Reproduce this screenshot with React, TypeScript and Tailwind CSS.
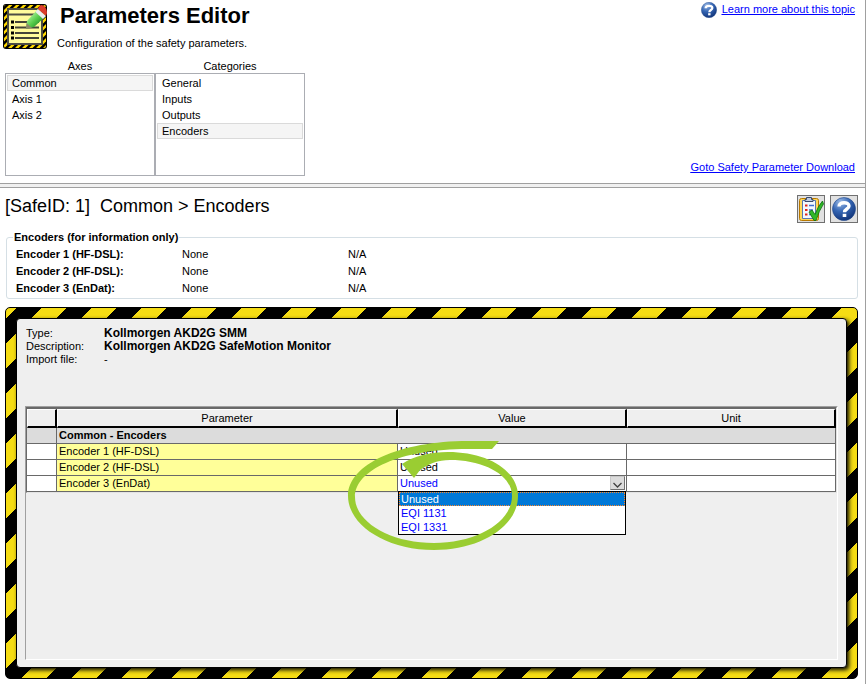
import { useState } from "react";
import clsx from "clsx";

type ListProps = {
    title: string;
    items: string[];
    value: string;
    onChange: (item: string) => void;
};

const axes = ["Common", "Axis 1", "Axis 2"];
const categories = ["General", "Inputs", "Outputs", "Encoders"];
const encoderTypes = ["Unused", "EQI 1131", "EQI 1331"];

const encoders = [
    { name: "Encoder 1 (HF-DSL)", type: "None", info: "N/A" },
    { name: "Encoder 2 (HF-DSL)", type: "None", info: "N/A" },
    { name: "Encoder 3 (EnDat)", type: "None", info: "N/A" },
];

const ParametersIcon = () => (
    <svg width="44" height="45" viewBox="0 0 44 45" aria-hidden="true">
        <defs>
            <pattern id="tape" width="7" height="7" patternUnits="userSpaceOnUse">
                <rect width="7" height="7" fill="#000" />
                <path d="M0 0H3.500L0 3.500ZM7 0V3.500L3.500 7H0Z" fill="#ffd800" />
            </pattern>
            <linearGradient id="pencil" x1="0" y1="0" x2="1" y2="1">
                <stop offset="0.2" stopColor="#b4f4a0" />
                <stop offset="0.5" stopColor="#58cc4c" />
                <stop offset="0.8" stopColor="#1c8a24" />
            </linearGradient>
        </defs>
        <rect width="44" height="45" rx="3" fill="#000" />
        <rect x="1" y="1" width="42" height="43" rx="2" fill="url(#tape)" />
        <rect x="4" y="4" width="36" height="37" fill="#4c4c44" />
        <rect x="6" y="6" width="32" height="33" fill="#fffb9c" />
        <path d="M6 10.500H38" stroke="#4c4c44" strokeWidth="2" />
        <path d="M12 18H36M12 23.500H36M12 29H36M12 34H36" stroke="#44443a" strokeWidth="2" />
        <path d="M8 18H11M8 23.500H11M8 29H11M8 34H11" stroke="#000" strokeWidth="3" />
        <path d="M23 25L24 17L35 5L43 12L31 23Z" fill="url(#pencil)" />
        <path d="M23 25L23.500 19L29 24Z" fill="#8c8868" />
        <path d="M32.500 8L35 5L43 12L40 15Z" fill="#ececec" />
        <path d="M35 5Q36 1 39 1Q44 3 44 9L43 12Z" fill="#dc3c2c" />
    </svg>
);

const HelpIcon = ({ size }: { size: number }) => (
    <svg width={size} height={size} viewBox="0 0 24 24" aria-hidden="true">
        <defs>
            <radialGradient id={`help${size}`} cx="0.35" cy="0.2" r="0.9">
                <stop offset="0" stopColor="#9dbbe6" />
                <stop offset="0.45" stopColor="#3566b4" />
                <stop offset="1" stopColor="#0c2c70" />
            </radialGradient>
        </defs>
        <circle cx="12" cy="12" r="11.5" fill={`url(#help${size})`} stroke="#1f468c" strokeWidth="0.6" />
        <path d="M7 9.500C7 4.600 17 4.600 17 9C17 12 12.500 12 12.500 15.200" fill="none" stroke="#fff" strokeWidth="3.400" />
        <rect x="10.700" y="16.800" width="3.600" height="3.200" fill="#fff" />
    </svg>
);

const ChecklistIcon = () => (
    <svg width="26" height="26" viewBox="0 0 26 26" aria-hidden="true">
        <rect x="1.5" y="2.5" width="19" height="22" rx="2" fill="#ffd858" stroke="#b87800" />
        <path d="M4.500 4.500H17.500V22.500H4.500Z" fill="#f2f8ff" stroke="#5878b0" />
        <path d="M7 3.500H8.500V1.500H13.500V3.500H15V5.500H7Z" fill="#c0cce0" stroke="#38486c" />
        <path d="M7 9.500H9.500M7 14H9.500M7 18.500H9.500" stroke="#e02818" strokeWidth="2" />
        <path d="M11 9.500H16M11 14H15M11 18.500H13" stroke="#4070d0" strokeWidth="1.500" />
        <path d="M11 16L14 14L17 18.500Q20 10 24.500 5L25.500 8Q21 14.500 18 24.500H16Z" fill="#30b828" stroke="#0c6c10" strokeWidth="0.8" />
    </svg>
);

const ListBox = ({ title, items, value, onChange }: ListProps) => (
    <div className="w-[150px]">
        <div className="text-center leading-[14px]">{title}</div>
        <div role="listbox" aria-label={title} className="h-[103px] border border-[#abadb3] p-px">
            {items.map((item) => (
                <button
                    key={item}
                    role="option"
                    aria-selected={item === value}
                    onClick={() => onChange(item)}
                    className={clsx(
                        "block h-4 w-full border px-1 text-left leading-[14px]",
                        item === value ? "border-[#dadada] bg-[#f5f5f5]" : "border-transparent"
                    )}
                >
                    {item}
                </button>
            ))}
        </div>
    </div>
);

const EncoderSelect = ({ label }: { label: string }) => {
    const [value, setValue] = useState("Unused");
    const [open, setOpen] = useState(true);

    return (
        <div className="relative h-[15px]">
            <select
                aria-label={label}
                value={value}
                onChange={(e) => setValue(e.target.value)}
                onMouseDown={(e) => {
                    e.preventDefault();
                    setOpen(!open);
                }}
                className="block h-[15px] w-full appearance-none px-[2px] leading-[15px] text-[#0000ff] outline-none"
            >
                {encoderTypes.map((type) => (
                    <option key={type}>{type}</option>
                ))}
            </select>
            <span className="pointer-events-none absolute top-0 right-px flex h-[14px] w-[15px] items-end justify-center border border-[#707070] border-t-[#c8c8c8] border-l-[#c8c8c8] bg-[#dcdcdc]">
                <svg width="9" height="7" viewBox="0 0 9 7" aria-hidden="true">
                    <path d="M0.500 1L4.500 5L8.500 1" fill="none" stroke="#404040" strokeWidth="1.300" />
                </svg>
            </span>
            {open && (
                <ul role="listbox" aria-label="Encoder types" className="absolute top-full left-0 z-10 w-full border border-black bg-white text-[#0000ff]">
                    {encoderTypes.map((type) => (
                        <li
                            key={type}
                            role="option"
                            aria-selected={type === value}
                            onClick={() => {
                                setValue(type);
                                setOpen(false);
                            }}
                            className={clsx(
                                "h-[14px] border border-dotted px-px leading-[12px]",
                                type === value ? "border-[#ff8728] bg-[#0078d7] text-white" : "border-transparent"
                            )}
                        >
                            {type}
                        </li>
                    ))}
                </ul>
            )}
        </div>
    );
};

const App = () => {
    const [axis, setAxis] = useState("Common");
    const [category, setCategory] = useState("Encoders");

    const headCell = "h-[19px] border-t border-r-2 border-b-2 border-l border-t-white border-r-black border-b-black border-l-white p-0 leading-4 font-normal";
    const cell = "h-4 border-r border-b border-[#696969] p-0";

    return (
        <div className="flex min-h-screen flex-col border-r border-[#a0a0a0] bg-white font-['Liberation_Sans',Arial,sans-serif] text-[11px] text-black">
            <header className="flex h-[183px] justify-between">
                <div>
                    <div className="flex gap-[10px] pt-1 pl-[3px]">
                        <ParametersIcon />
                        <div>
                            <h1 className="pl-[3px] text-[22px] leading-6 font-bold">Parameters Editor</h1>
                            <p className="pt-2 leading-[14px]">Configuration of the safety parameters.</p>
                        </div>
                    </div>
                    <div className="flex pt-[9px] pl-[5px]">
                        <ListBox title="Axes" items={axes} value={axis} onChange={setAxis} />
                        <ListBox title="Categories" items={categories} value={category} onChange={setCategory} />
                    </div>
                </div>
                <nav className="flex flex-col items-end justify-between py-[2px] pr-[10px] pb-[9px] text-[#0000ff] underline">
                    <a href="#help" className="flex items-start gap-[5px] leading-[14px]">
                        <HelpIcon size={16} />
                        Learn more about this topic
                    </a>
                    <a href="#download" className="leading-[14px]">Goto Safety Parameter Download</a>
                </nav>
            </header>

            <div className="h-[5px] border-y border-[#a0a0a0] bg-[#f0f0f0]" />

            <main className="flex flex-1 flex-col pr-[7px] pb-[5px] pl-[5px]">
                <div className="flex items-start justify-between pt-[7px]">
                    <h2 className="pt-px text-[18px] leading-5 whitespace-pre">[SafeID: 1]  Common &gt; Encoders</h2>
                    <div className="flex gap-[5px]">
                        <button aria-label="Check parameters" className="flex size-7 items-center justify-center border border-[#707070] bg-[#e1e1e1]">
                            <ChecklistIcon />
                        </button>
                        <button aria-label="Help" className="flex size-7 items-center justify-center border border-[#707070] bg-[#e1e1e1]">
                            <HelpIcon size={24} />
                        </button>
                    </div>
                </div>

                <fieldset className="mt-[7px] ml-px rounded-[3px] border border-[#d5dfe5] px-[9px] pt-[2px] pb-px">
                    <legend className="-ml-[3px] px-px leading-[14px] font-bold">Encoders (for information only)</legend>
                    {encoders.map((encoder) => (
                        <div key={encoder.name} className="flex leading-[17px]">
                            <span className="w-[166px] font-bold">{encoder.name}:</span>
                            <span className="w-[166px]">{encoder.type}</span>
                            <span>{encoder.info}</span>
                        </div>
                    ))}
                </fieldset>

                {/* Hazard tape frame */}
                <div className="mt-2 flex flex-1 flex-col rounded-[5px] border border-black bg-[linear-gradient(135deg,#f5dc14_11%,#000_11%,#000_36%,#f5dc14_36%,#f5dc14_61%,#000_61%,#000_86%,#f5dc14_86%)] bg-[size:50px_50px] p-[10px]">
                    <div className="flex flex-1 flex-col rounded-[4px] border border-black bg-[#efefef] px-2 pt-2 pb-[7px] shadow-[2px_2px_4px_#000]">
                        <dl className="grid grid-cols-[78px_1fr] pl-px leading-[13px]">
                            <dt>Type:</dt>
                            <dd className="text-[12px] font-bold">Kollmorgen AKD2G SMM</dd>
                            <dt>Description:</dt>
                            <dd className="text-[12px] font-bold">Kollmorgen AKD2G SafeMotion Monitor</dd>
                            <dt>Import file:</dt>
                            <dd>-</dd>
                        </dl>

                        <div className="relative mt-10 flex-1 border border-t-[#a0a0a0] border-r-white border-b-white border-l-[#a0a0a0]">
                            <div className="h-full border border-t-[#696969] border-r-[#e3e3e3] border-b-[#e3e3e3] border-l-[#696969]">
                                <table className="w-full table-fixed border-separate border-spacing-0 border-t border-[#696969]">
                                    <colgroup>
                                        <col className="w-[30px]" />
                                        <col className="w-[341px]" />
                                        <col className="w-[229px]" />
                                        <col />
                                    </colgroup>
                                    <thead>
                                        <tr>
                                            <th className={headCell} aria-label="Row" />
                                            <th className={headCell}>Parameter</th>
                                            <th className={headCell}>Value</th>
                                            <th className={headCell}>Unit</th>
                                        </tr>
                                    </thead>
                                    <tbody>
                                        <tr className="bg-[#dcdcdc]">
                                            <td className={cell} />
                                            <td colSpan={3} className={clsx(cell, "pl-[2px]! leading-[15px] font-bold")}>Common - Encoders</td>
                                        </tr>
                                        {encoders.map((encoder, i) => (
                                            <tr key={encoder.name} className="bg-white">
                                                <td className={cell} />
                                                <td className={clsx(cell, "bg-[#ffff99] pl-[2px]! leading-[15px]")}>{encoder.name}</td>
                                                <td className={clsx(cell, "leading-[15px]")}>
                                                    {i === 2 ? <EncoderSelect label={encoder.name} /> : <span className="pl-[2px]">Unused</span>}
                                                </td>
                                                <td className={cell} />
                                            </tr>
                                        ))}
                                    </tbody>
                                </table>
                            </div>
                            {/* Circled arrow over the open drop-down */}
                            <svg width="172" height="112" viewBox="347 440 172 112" className="pointer-events-none absolute top-[33px] left-[321px] z-20" aria-hidden="true">
                                <path
                                    d="M499 441H468C400 441 348 464 348 496C348 525 386 550 434 550C481 550 518 526 518 496C518 470 487 452 448 452C431 452 413 456 402 464L414 478L420 470C428 464 438 460 450 460C484 460 512 475 512 496C512 522 477 543 434 543C390 543 355 522 355 497C355 470 400 449 468 449H492Z"
                                    fill="#9acd32"
                                />
                            </svg>
                        </div>
                    </div>
                </div>
            </main>
        </div>
    );
};

export default App;
